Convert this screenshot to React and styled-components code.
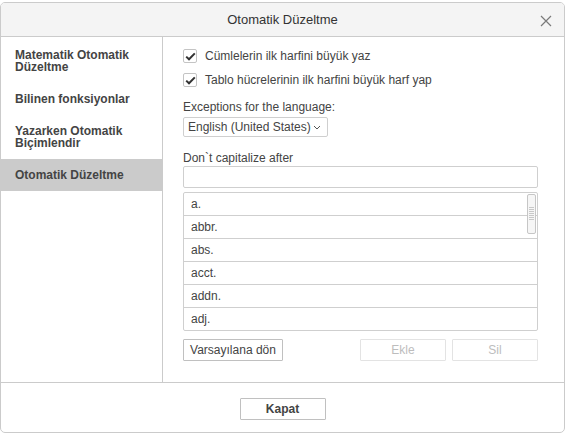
import React from "react";
import styled, { createGlobalStyle } from "styled-components";

const COLORS = {
  text: "#444444",
  border: "#cbcbcb",
  field: "#cfcfcf",
  header: "#f4f4f4",
  selected: "#cbcbcb",
  disabledBorder: "#e3e3e3",
  disabledText: "#bdbdbd",
};

const SECTIONS = [
  "Matematik Otomatik Düzeltme",
  "Bilinen fonksiyonlar",
  "Yazarken Otomatik Biçimlendir",
  "Otomatik Düzeltme",
];

const OPTIONS = [
  "Cümlelerin ilk harfini büyük yaz",
  "Tablo hücrelerinin ilk harfini büyük harf yap",
];

const EXCEPTIONS = ["a.", "abbr.", "abs.", "acct.", "addn.", "adj."];

const GlobalStyle = createGlobalStyle`
  html, body {
    margin: 0;
    padding: 0;
    background: #ffffff;
  }
  body {
    font-family: "Liberation Sans", Arial, sans-serif;
    font-size: 12px;
    color: ${COLORS.text};
  }
`;

const App = () => {
  const active = "Otomatik Düzeltme";

  return (
    <Page>
      <GlobalStyle />
      <Dialog>
        <Header>
          <Title>Otomatik Düzeltme</Title>
          <CloseButton aria-label="Kapat">
            <svg width="12" height="12" viewBox="0 0 12 12">
              <path
                d="M1 1 L11 11 M11 1 L1 11"
                stroke="#7a7a7a"
                strokeWidth="1.2"
                fill="none"
              />
            </svg>
          </CloseButton>
        </Header>

        <Body>
          <Sidebar>
            {SECTIONS.map((name) => (
              <NavItem key={name} $active={name === active}>
                {name}
              </NavItem>
            ))}
          </Sidebar>

          <Content>
            <Options>
              {OPTIONS.map((label) => (
                <CheckRow key={label}>
                  <CheckBox>
                    <svg width="11" height="9" viewBox="0 0 11 9">
                      <path
                        d="M1.2 4.6 L4 7.3 L9.8 1.4"
                        stroke="#333"
                        strokeWidth="2"
                        fill="none"
                      />
                    </svg>
                  </CheckBox>
                  {label}
                </CheckRow>
              ))}
            </Options>

            <FieldLabel $top={13}>Exceptions for the language:</FieldLabel>
            <Select>
              English (United States)
              <svg width="8" height="5" viewBox="0 0 8 5">
                <path d="M1 1 L4 4 L7 1" stroke="#555" strokeWidth="1" fill="none" />
              </svg>
            </Select>

            <FieldLabel $top={14}>Don`t capitalize after</FieldLabel>
            <TextInput />

            <List>
              {EXCEPTIONS.map((item) => (
                <ListRow key={item}>{item}</ListRow>
              ))}
              <ScrollThumb>
                <Grip />
              </ScrollThumb>
            </List>

            <Actions>
              <Button $width={100}>Varsayılana dön</Button>
              <Spacer />
              <Button $width={86} disabled>
                Ekle
              </Button>
              <Button $width={86} disabled>
                Sil
              </Button>
            </Actions>
          </Content>
        </Body>

        <Footer>
          <Button $width={86} $bold>
            Kapat
          </Button>
        </Footer>
      </Dialog>
    </Page>
  );
};

const Page = styled.div`
  padding-top: 2px;
`;

const Dialog = styled.div`
  width: 565px;
  height: 431px;
  box-sizing: border-box;
  border: 1px solid ${COLORS.border};
  border-radius: 5px;
  overflow: hidden;
  display: flex;
  flex-direction: column;
  background: #ffffff;
`;

const Header = styled.header`
  position: relative;
  height: 33px;
  flex-shrink: 0;
  background: ${COLORS.header};
  border-bottom: 1px solid ${COLORS.border};
  display: flex;
  align-items: center;
  justify-content: center;
`;

const Title = styled.h1`
  margin: 0;
  font-size: 13px;
  font-weight: normal;
  color: #333333;
`;

const CloseButton = styled.button`
  position: absolute;
  right: 12px;
  top: 12px;
  padding: 0;
  border: none;
  background: none;
  width: 12px;
  height: 12px;
  display: flex;
`;

const Body = styled.div`
  flex: 1;
  display: flex;
  border-bottom: 1px solid ${COLORS.border};
`;

const Sidebar = styled.nav`
  width: 161px;
  flex-shrink: 0;
  padding-top: 2px;
  border-right: 1px solid ${COLORS.border};
`;

const NavItem = styled.div`
  padding: 10px 14px;
  font-weight: bold;
  line-height: 12px;
  color: ${COLORS.text};
  background: ${(p) => (p.$active ? COLORS.selected : "transparent")};
`;

const Content = styled.section`
  flex: 1;
  padding: 12px 26px 0 20px;
  display: flex;
  flex-direction: column;
`;

const Options = styled.div`
  display: flex;
  flex-direction: column;
  gap: 10px;
`;

const CheckRow = styled.label`
  display: flex;
  align-items: center;
  gap: 8px;
  height: 14px;
  line-height: 14px;
`;

const CheckBox = styled.span`
  width: 14px;
  height: 14px;
  box-sizing: border-box;
  border: 1px solid #c4c4c4;
  border-radius: 2px;
  display: flex;
  align-items: center;
  justify-content: center;
  background: #ffffff;
`;

const FieldLabel = styled.div`
  margin-top: ${(p) => p.$top}px;
  line-height: 14px;
`;

const Select = styled.div`
  margin-top: 3px;
  width: 145px;
  height: 20px;
  box-sizing: border-box;
  border: 1px solid ${COLORS.field};
  border-radius: 2px;
  padding: 0 6px 0 4px;
  display: flex;
  align-items: center;
  justify-content: space-between;
`;

const TextInput = styled.div`
  margin-top: 1px;
  height: 22px;
  box-sizing: border-box;
  border: 1px solid ${COLORS.field};
  border-radius: 2px;
`;

const List = styled.div`
  position: relative;
  margin-top: 4px;
  border: 1px solid ${COLORS.field};
  border-radius: 2px;
`;

const ListRow = styled.div`
  height: 22px;
  line-height: 22px;
  padding-left: 7px;
  & + & {
    border-top: 1px solid ${COLORS.field};
  }
`;

const ScrollThumb = styled.div`
  position: absolute;
  top: 1px;
  right: 1px;
  width: 9px;
  height: 40px;
  box-sizing: border-box;
  border: 1px solid #c6c6c6;
  border-radius: 2px;
  background: #f6f6f6;
  display: flex;
  align-items: center;
  justify-content: center;
`;

const Grip = styled.div`
  width: 5px;
  height: 14px;
  background: repeating-linear-gradient(
    to bottom,
    #c8c8c8 0,
    #c8c8c8 1px,
    transparent 1px,
    transparent 2px
  );
`;

const Actions = styled.div`
  margin-top: 8px;
  display: flex;
  gap: 6px;
`;

const Spacer = styled.div`
  flex: 1;
`;

const Button = styled.button`
  width: ${(p) => p.$width}px;
  height: 22px;
  padding: 0;
  background: #ffffff;
  border: 1px solid #c0c0c0;
  border-radius: 1px;
  font-family: "Liberation Sans", Arial, sans-serif;
  font-size: 12px;
  font-weight: ${(p) => (p.$bold ? "bold" : "normal")};
  color: ${COLORS.text};

  &:disabled {
    border-color: ${COLORS.disabledBorder};
    color: ${COLORS.disabledText};
  }
`;

const Footer = styled.footer`
  height: 49px;
  flex-shrink: 0;
  padding-top: 15px;
  box-sizing: border-box;
  display: flex;
  justify-content: center;
  align-items: flex-start;
`;

export default App;
